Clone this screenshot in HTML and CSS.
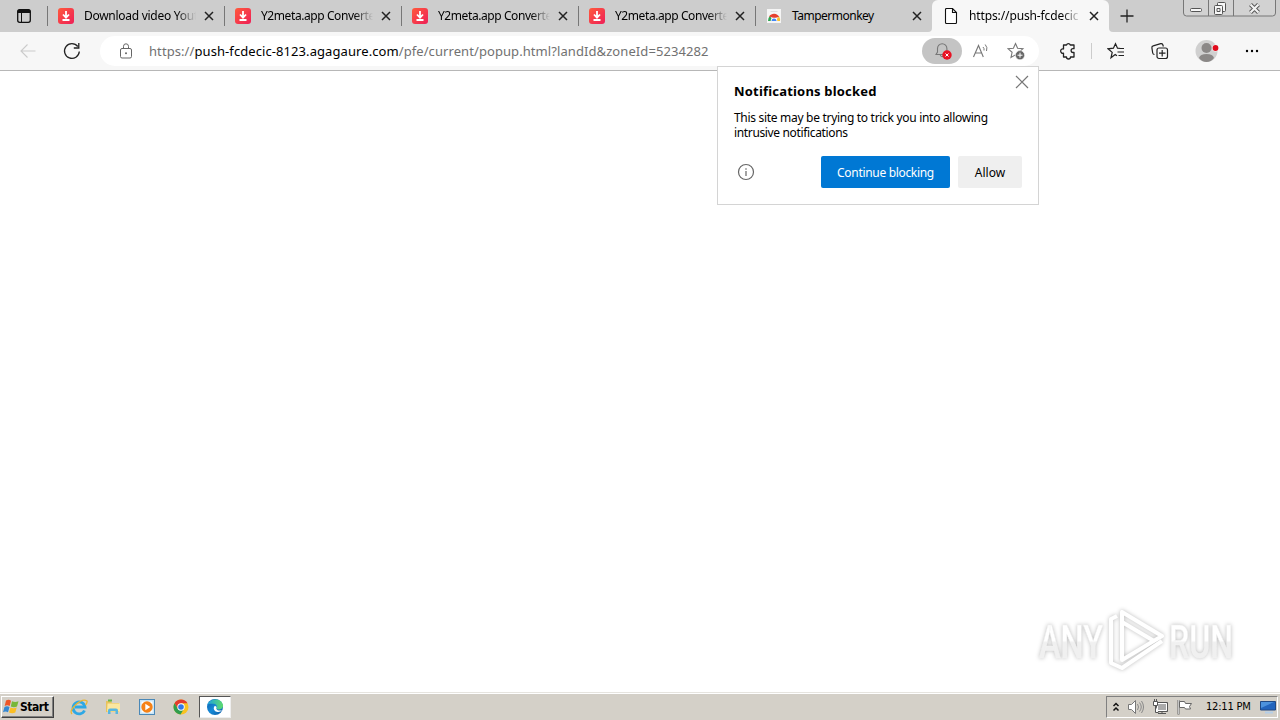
FILE: index.html
```html
<!DOCTYPE html>
<html lang="en">
<head>
<meta charset="utf-8">
<title>Browser</title>
<link rel="stylesheet" href="styles.css">
</head>
<body>
<svg class="defs" aria-hidden="true">
  <defs>
    <linearGradient id="red" x2="1" y2="1"><stop stop-color="#ff5a3c"/><stop offset="1" stop-color="#ee1f58"/></linearGradient>
    <linearGradient id="edge" x1="0" y1="0" x2="1" y2="1"><stop stop-color="#0b5fae"/><stop offset=".5" stop-color="#1689d6"/><stop offset="1" stop-color="#0c59a4"/></linearGradient>
    <linearGradient id="edge2" x2="1"><stop stop-color="#1ba1e2"/><stop offset="1" stop-color="#5fdc6a"/></linearGradient>
    <linearGradient id="mark" x2="0" y2="1"><stop offset=".48" stop-color="#fff"/><stop offset=".52" stop-color="#f0f0f0"/></linearGradient>
  </defs>
  <symbol id="dl" viewBox="0 0 16 16"><rect width="16" height="16" rx="3" fill="url(#red)"/><path d="M8 3v6M5 6.5 8 9.7l3-3.2M4.500 12h7" fill="none" stroke="#fff" stroke-width="1.800"/></symbol>
  <symbol id="x" viewBox="0 0 10 10"><path d="m1 1 8 8M9 1 1 9" stroke="#222" stroke-width="1.500"/></symbol>
</svg>

<header class="tabs">
  <div class="workspace"><svg width="16" height="16" viewBox="0 0 16 16"><rect x="1.700" y="1.700" width="12.600" height="12.600" rx="2" fill="none" stroke="#111" stroke-width="1.300"/><path d="M1.500 5V3.500q0-2 2-2h9q2 0 2 2V5z" fill="#111"/><path d="M5.500 5v9" stroke="#111"/></svg></div>
  <div class="tab"><svg class="fav"><use href="#dl"/></svg><span class="title fade">Download video Yout</span><svg class="close"><use href="#x"/></svg></div>
  <div class="tab"><svg class="fav"><use href="#dl"/></svg><span class="title fade y2">Y2meta.app Converte</span><svg class="close"><use href="#x"/></svg></div>
  <div class="tab"><svg class="fav"><use href="#dl"/></svg><span class="title fade y2">Y2meta.app Converte</span><svg class="close"><use href="#x"/></svg></div>
  <div class="tab"><svg class="fav"><use href="#dl"/></svg><span class="title fade y2">Y2meta.app Converte</span><svg class="close"><use href="#x"/></svg></div>
  <div class="tab"><svg class="fav" viewBox="0 0 16 16"><path d="M1 1h14v14H1z" fill="#f5f5f5"/><path d="M4.500 3.500h7" stroke="#ddd"/><path d="M2 13a6 6 0 0 1 2-5l3 5z" fill="#2da64f"/><path d="M3 8.500a6 6 0 0 1 10.300.5L8 10z" fill="#e6412e"/><path d="M13 8.500a6 6 0 0 1 1 4.500H9z" fill="#fac12d"/><path d="M4.700 13a3.300 3.300 0 0 1 6.600 0z" fill="#fff"/><path d="M5.500 13a2.500 2.500 0 0 1 5 0z" fill="#4285f4"/></svg><span class="title tamper">Tampermonkey</span><svg class="close"><use href="#x"/></svg></div>
  <div class="tab active"><svg class="fav" viewBox="0 0 16 16"><path d="M2.500 1.500q0-1 1-1h6l4 4v10q0 1-1 1h-9q-1 0-1-1zM9.500.5v4h4" fill="#fff" stroke="#111" stroke-width="1.100"/></svg><span class="title fade push">https://push-fcdecic</span><svg class="close"><use href="#x"/></svg></div>
  <div class="rest"><svg width="16" height="16"><path d="M8 1.500v13M1.500 8h13" stroke="#222" stroke-width="1.300"/></svg></div>
  <svg class="winctl" width="94" height="17" viewBox="0 0 94 17"><path d="M.5 0v13q0 3 3 3h86q3 0 3-3V0M25.500 0v16M50.500 0v16" fill="#d2d2d2" stroke="#777"/><g fill="#f7f7f7" stroke="#555"><rect x="7.500" y="8.500" width="11" height="3" rx="1"/><rect x="34.500" y="2.500" width="8" height="9" rx="1"/><rect x="31.500" y="5.500" width="8" height="9" rx="1"/><path d="M34 8.500h3v3h-3z"/></g><path d="m67.500 4.500 8 8m0-8-8 8" stroke="#555" stroke-width="4"/><path d="m67.500 4.500 8 8m0-8-8 8" stroke="#f2f2f2" stroke-width="2.200"/></svg>
</header>

<div class="toolbar">
  <svg class="back" width="16" height="16" viewBox="0 0 16 16"><path d="M15.500 8H1M7.500 1.500 1 8l6.500 6.500" fill="none" stroke="#cbcbcb" stroke-width="1.100"/></svg>
  <svg class="reload" width="18" height="18" viewBox="0 0 18 18"><path d="M16.300 9.500A7.400 7.400 0 1 1 14.800 4.500M15.800 1v5h-5" fill="none" stroke="#222" stroke-width="1.300"/></svg>
  <div class="address">
    <svg class="lock" width="14" height="16" viewBox="0 0 14 16"><rect x="1.500" y="5.500" width="11" height="9.500" rx="1.500" fill="none" stroke="#666"/><path d="M4.500 5.500V3.300a2.500 2.500 0 0 1 5 0v2.200" fill="none" stroke="#666"/><circle cx="7" cy="10.300" r="1" fill="#666"/></svg>
    <span class="url">https://<b>push-fcdecic-8123.agagaure.com</b>/pfe/current/popup.html?landId&amp;zoneId=5234282</span>
    <span class="bell"><svg width="20" height="18" viewBox="0 0 20 18"><path d="M3 12.500 4.500 10V6.500a4.700 4.700 0 0 1 9.400 0V10l1.400 2.500zM7.300 13a2 2 0 0 0 3.400 1" fill="none" stroke="#777" stroke-width="1.100"/><circle cx="14" cy="13" r="4.700" fill="#e81123"/><path d="m12.500 11.500 3 3m0-3-3 3" stroke="#fff"/></svg></span>
    <svg class="read" width="18" height="16" viewBox="0 0 18 16"><path d="m1.500 14 5-11.500L11.300 14M3.300 10h6.300" fill="none" stroke="#777" stroke-width="1.100"/><path d="M11 4q1.500 1.500 1 3.500M13.200 1.500q2.700 3 1.300 6.500" fill="none" stroke="#777"/></svg>
    <svg class="fave" width="18" height="18" viewBox="0 0 18 18"><path d="m8.500 1.500 2.100 4.800 5.300.5-4 3.500 1.100 5.200-4.500-2.700L4 15.500l1.100-5.200-4-3.500 5.300-.5z" fill="none" stroke="#777" stroke-width="1.100"/><circle cx="13" cy="13.200" r="4.600" fill="#666" stroke="#fff" stroke-width=".6"/><path d="M13 10.700v5M10.500 13.200h5" stroke="#fff"/></svg>
  </div>
  <svg class="ext" width="18" height="18" viewBox="0 0 18 18"><path d="M5 3h2.500a2 2 0 0 1 3.800 0H15v3.700h-1a1.900 1.900 0 0 0 0 3.800h1V15h-3.500a2 2 0 0 1-4 0H4.500v-3.800a2.200 2.200 0 1 1 0-4.200V3z" fill="none" stroke="#222" stroke-width="1.300" stroke-linejoin="round"/></svg>
  <i class="sep"></i>
  <svg class="favs" width="18" height="18" viewBox="0 0 18 18"><path d="M10 13.700 8.200 12.500 4 15.800l1.200-5.400-4.100-3.600 5.300-.6L8.500 1.700l2 4.500 3 .3M11 6.500h6M10.500 10h6.500M11.500 13.500H17" fill="none" stroke="#222" stroke-width="1.200"/></svg>
  <svg class="coll" width="18" height="18" viewBox="0 0 18 18"><path d="M3.500 12.500q-1.500 0-1.800-1.500L.9 5.800q-.2-1.700 1.300-2l7.500-2.200q1.500-.3 2 .9l.7 2" fill="none" stroke="#222" stroke-width="1.200"/><rect x="6" y="6" width="10.500" height="10.500" rx="2" fill="none" stroke="#222" stroke-width="1.200"/><path d="M11.200 8v6.500M8 11.200h6.500" stroke="#222" stroke-width="1.200"/></svg>
  <svg class="user" width="24" height="24" viewBox="0 0 24 24"><circle cx="11.500" cy="12" r="11" fill="#d0d0d0"/><circle cx="11.500" cy="9" r="5" fill="#8b8887"/><path d="M4 19q1-4 7.500-4t7.500 4q-3 4-7.500 4T4 19" fill="#8b8887"/><circle cx="20.500" cy="9" r="3.500" fill="#f7f7f7"/><circle cx="20.500" cy="9" r="2.900" fill="#e00b1c"/></svg>
  <svg class="more" width="14" height="4"><circle cx="2" cy="2" r="1.200"/><circle cx="7" cy="2" r="1.200"/><circle cx="12" cy="2" r="1.200"/></svg>
</div>

<main class="page">
  <svg class="watermark" width="210" height="70" viewBox="1030 605 210 70">
    <g fill="url(#mark)" stroke="#f2f2f2" stroke-width=".5">
      <text class="any" x="1039" y="659" textLength="64" lengthAdjust="spacingAndGlyphs">ANY</text>
      <text class="any" x="1169" y="659" textLength="64" lengthAdjust="spacingAndGlyphs">RUN</text>
    </g>
    <g fill="none" stroke="#fff" stroke-width="4" stroke-linejoin="round"><path d="M1122 613v48l40-24zM1122 623l32 19"/><path d="M1117 617l-6 3v44l11 5 40-27"/></g>
  </svg>
</main>

<section class="popup">
  <svg class="dismiss" width="14" height="14"><path d="m1 1 12 12M13 1 1 13" stroke="#777" stroke-width="1.200"/></svg>
  <h1>Notifications blocked</h1>
  <p><span class="l1">This site may be trying to trick you into allowing</span><br><span class="l2">intrusive notifications</span></p>
  <div class="actions">
    <svg class="info" width="18" height="18"><circle cx="9" cy="9" r="7.500" fill="none" stroke="#666" stroke-width="1.200"/><path d="M9 8v5M9 5.300v1.400" stroke="#666" stroke-width="1.200"/></svg>
    <button class="primary">Continue blocking</button><button class="allow">Allow</button>
  </div>
</section>

<footer class="taskbar">
  <div class="start"><svg width="17" height="17" viewBox="0 0 17 17"><path d="M3 2.500q3-1.500 5 .3L6.700 8q-2.500-1.500-5 0z" fill="#ee5527"/><path d="M9 3.200q3 1.500 6.500 0L14 8.400q-3 1.500-6.200 0z" fill="#78b738"/><path d="M1.500 9q2.500-1.500 5 0L5 14.200q-2.500-1.500-5 0z" fill="#3487d2"/><path d="M7.500 9.400q3 1.500 6.200 0l-1.400 5.200q-3 1.500-6.300 0z" fill="#fbbe24"/></svg><span>Start</span></div>
  <svg class="task ie" viewBox="0 0 18 18"><path d="M14.500 12.500A6 6 0 1 1 15 9H5" fill="none" stroke="#2da8e5" stroke-width="2.800"/><path d="M2 16Q-1 13 6 6.500T17 3q.5 2-1.500 4" fill="none" stroke="#e9b634" stroke-width="1.300"/></svg>
  <svg class="task" viewBox="0 0 18 18"><path d="M2 3h5l1 2h7v9H2z" fill="#e8c35c"/><path d="M3.500 5.500H16v8H3z" fill="#fbe7a0"/><path d="M4 16v-3.500q0-2 2-2h6q2 0 2 2V16h-2.500v-3h-5v3z" fill="#58b6e0"/><path d="M4 2.500h4" stroke="#68b64d" stroke-width="2"/></svg>
  <svg class="task" viewBox="0 0 18 18"><rect x="1.500" y="1.500" width="15" height="15" fill="#c8e5f7" stroke="#4a88b7"/><rect x="3.500" y="3.500" width="11" height="11" fill="#fff"/><circle cx="9" cy="9" r="5.700" fill="#f58217"/><path d="m7.300 5.800 5 3.200-5 3.200z" fill="#fff"/></svg>
  <svg class="task chrome" viewBox="0 0 18 18"><circle cx="9" cy="9" r="7.500" fill="#f9c321"/><path d="M2.500 5.200a7.500 7.500 0 0 1 13 0H9L6 11z" fill="#e33b2e"/><path d="M2.500 5.200a7.500 7.500 0 0 0 6 11.300l3.300-5.500H6z" fill="#2f9d4e"/><circle cx="9" cy="9" r="3.700" fill="#fff"/><circle cx="9" cy="9" r="2.800" fill="#3279e8"/></svg>
  <div class="current"><svg width="18" height="18" viewBox="0 0 18 18"><circle cx="9" cy="9" r="8" fill="url(#edge)"/><path d="M1.200 7.300C3 .2 15-1 17 7c.7 4-4.500 5.700-6.800 3.500 1.500-1.300.8-4.500-2.700-4.700C4.500 5.600 2 6 1.200 7.300z" fill="url(#edge2)"/><path d="M10.200 10.500c1 2.500 4 2.500 6 1.500-1.300 1.700-3.500 2.300-5.500 1.700-3-.8-3.700-4-2-5.800 1.300-.2 2.500 1 1.500 2.600z" fill="#fff"/></svg></div>
  <div class="tray">
    <svg width="8" height="10"><path d="m1.500 4 2.500-2.500L6.500 4m-5 4.500L4 6l2.500 2.500" fill="none" stroke="#111" stroke-width="1.500"/></svg>
    <svg width="18" height="16"><path d="M1.500 5.500h3l4-4v13l-4-4h-3z" fill="#fff" stroke="#777"/><path d="M10.500 5q2 3 0 6M12.500 3.500q3.500 4.500 0 9M14.500 2q4 6 0 12" fill="none" stroke="#888"/></svg>
    <svg width="17" height="16"><path d="M4.500 3.500h11v9h-11z" fill="#aaa" stroke="#555"/><path d="M5.500 4.500h9v7h-9z" fill="none" stroke="#fff"/><path d="M6 14.500h8M10 12.500v2" stroke="#555"/><path d="M1.500 2.500h4v4h-4zM3.500 7v6.500h3M2.500 0v2M4.500 0v2" fill="#fff" stroke="#555"/></svg>
    <svg width="17" height="16"><path d="M2.500 1v14.500" stroke="#666" stroke-width="2"/><path d="M2.500 1v14" stroke="#eee" stroke-width=".7"/><path d="M3.500 2.500h5l1 2h6l-2 3 1 2.500h-5l-1-1.500h-5z" fill="#fff" stroke="#666"/></svg>
    <span class="clock">12:11 PM</span>
    <svg class="desk" width="16" height="14"><path d="M.5 1.500h15v8.500H.5z" fill="#2264bd" stroke="#204984"/><path d="M1 2h13L1 8z" fill="#4c92dd"/><path d="M5 12.500h8" stroke="#b4cee8" stroke-width="2"/></svg>
  </div>
</footer>
</body>
</html>
```
FILE: styles.css
```css
* { box-sizing: border-box; }
body { margin: 0; width: 1280px; height: 720px; overflow: hidden; display: flex; flex-direction: column; position: relative; background: #fff; font-family: "Noto Sans", sans-serif; }
svg { display: block; flex: none; }
.defs { position: absolute; width: 0; height: 0; }
.tabs { display: flex; height: 32px; background: #f7f7f7; position: relative; flex: none; }
.workspace { width: 47px; padding: 8px 0 0 16px; background: #cdcdcd; }
.tab { width: 177px; display: flex; align-items: center; padding: 0 9px 0 11px; background: linear-gradient(#777, #777) 0 6px / 1px 20px no-repeat #cdcdcd; }
.tab:nth-child(6) { border-radius: 0 0 4px 0; }
.tab.active { background: #f7f7f7; border-radius: 6px 6px 0 0; box-shadow: 0 -8px 0 #cdcdcd; }
.fav { width: 16px; height: 16px; }
.title { width: 112px; margin: 0 9px 0 10px; white-space: nowrap; font-size: 12px; line-height: 18px; color: #000; letter-spacing: -.28px; }
.y2 { letter-spacing: -.42px; }
.tamper { letter-spacing: -.5px; }
.push { letter-spacing: -.12px; }
.fade { -webkit-mask-image: linear-gradient(90deg, #000 83%, transparent 100%); mask-image: linear-gradient(90deg, #000 83%, transparent 100%); }
.close { width: 10px; height: 10px; margin-left: -1px; }
.rest { flex: 1; background: #cdcdcd; border-radius: 0 0 0 4px; padding: 8px 0 0 10px; }
.winctl { position: absolute; left: 1183px; top: 0; }
.toolbar { height: 39px; flex: none; display: flex; align-items: center; background: #f7f7f7; border-bottom: 1px solid #b7b7b7; }
.back { margin-left: 20px; }
.reload { margin-left: 27px; }
.address { width: 939px; height: 30px; margin-left: 19px; padding-left: 19px; border-radius: 15px; background: #fff; display: flex; align-items: center; }
.url { width: 773px; margin-left: 16px; font-size: 13px; line-height: 20px; letter-spacing: .08px; color: #717171; white-space: nowrap; }
.url b { font-weight: 400; color: #000; }
.bell { width: 40px; height: 26px; border-radius: 13px; background: #c4c4c4; padding: 4px 0 0 11px; flex: none; }
.read { margin-left: 10px; }
.fave { margin-left: 17px; }
.ext { margin-left: 20px; }
.sep { width: 1px; height: 16px; background: #ccc; margin-left: 14px; }
.favs { margin-left: 15px; }
.coll { margin-left: 26px; }
.user { margin-left: 26px; }
.more { margin-left: 26px; }
.page { flex: 1; display: flex; justify-content: flex-end; align-items: flex-end; padding: 0 40px 18px 0; }
.watermark { filter: drop-shadow(0 0 2px #bbb); }
.any { font: 500 47px Roboto, sans-serif; }
.popup { position: absolute; left: 717px; top: 66px; width: 322px; height: 139px; background: #fff; border: 1px solid #d4d4d4; padding: 15px 16px 16px; color: #000; }
.dismiss { position: absolute; right: 9px; top: 8px; }
.popup h1 { margin: 0; font-size: 13px; line-height: 19px; font-weight: 700; letter-spacing: .19px; white-space: nowrap; }
.popup p { margin: 9px 0 0; font-size: 12px; line-height: 15px; white-space: nowrap; }
.l1 { letter-spacing: -.3px; }
.l2 { letter-spacing: -.35px; }
.actions { margin-top: 16px; display: flex; align-items: center; }
.info { margin: 0 66px 0 3px; }
.actions button { height: 32px; border: 0; border-radius: 2px; padding: 0; font: 12px "Noto Sans", sans-serif; white-space: nowrap; }
.actions .primary { width: 129px; background: #0078d4; color: #fff; letter-spacing: -.32px; }
.actions .allow { width: 64px; margin-left: 8px; background: #efefef; color: #000; }
.taskbar { height: 28px; flex: none; display: flex; align-items: center; padding-top: 1px; background: #d4d0c8; box-shadow: inset 0 1px #e6e4df, inset 0 2px #fff; }
.start { width: 53px; height: 22px; margin: 0 16px 0 1px; display: flex; align-items: center; border: 1px solid; border-color: #fff #404040 #404040 #fff; box-shadow: inset -1px -1px #808080; padding-left: 1px; font: 700 12px "DejaVu Sans Condensed", "DejaVu Sans", sans-serif; }
.start span { letter-spacing: -.45px; }
.task { width: 18px; height: 18px; margin-right: 16px; }
.task.chrome { margin-right: 9px; }
.current { width: 32px; height: 22px; background: #fff; border: 1px solid; border-color: #555 #eee #eee #555; display: flex; align-items: center; justify-content: center; }
.tray { width: 172px; height: 22px; margin: 0 2px 0 auto; padding-left: 5px; display: flex; align-items: center; gap: 7px; border: 1px solid; border-color: #808080 #fff #fff #808080; }
.clock { margin-left: 6px; width: 47px; font: 11px "DejaVu Sans Condensed", "DejaVu Sans", sans-serif; white-space: nowrap; letter-spacing: -.2px; }
```
